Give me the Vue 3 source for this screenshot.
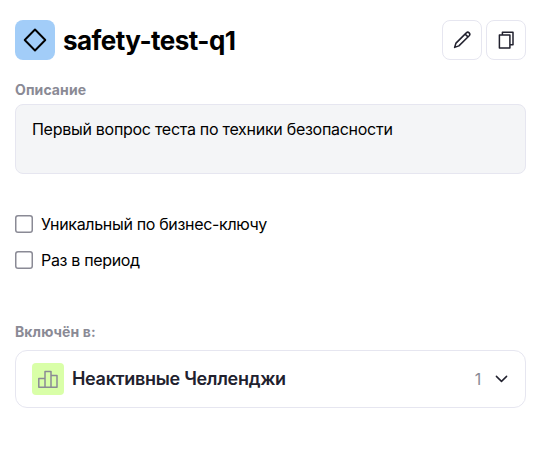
<script setup>
import { ref } from 'vue'

const options = ref([
  { id: 'unique', label: 'Уникальный по бизнес-ключу', checked: false },
  { id: 'period', label: 'Раз в период', checked: false },
])
</script>

<template>
  <main class="card">
    <header class="card_header">
      <span class="card_logo">
        <svg width="24" height="24" viewBox="0 0 24 24">
          <path d="M12 1.5 22.3 12 12 22.5 1.7 12Z" />
        </svg>
      </span>
      <h1 class="card_title">safety-test-q1</h1>
      <div class="card_actions">
        <button class="card_button" type="button" aria-label="Редактировать">
          <svg width="20" height="20" viewBox="0 0 20 20">
            <path d="M2.6 17.4 4 13.1 14.3 2.9a1.9 1.9 0 0 1 2.9 2.8L6.9 15.9Z M13.1 4.1l2.9 2.8" />
          </svg>
        </button>
        <button class="card_button" type="button" aria-label="Копировать">
          <svg width="20" height="20" viewBox="0 0 20 20">
            <path d="M3.4 5.1h10.5v12.8H3.4Z M6.4 5.1V2.3H17v12.4h-3.1" />
          </svg>
        </button>
      </div>
    </header>

    <h2 class="card_label">Описание</h2>
    <div class="description">Первый вопрос теста по техники безопасности</div>

    <div class="options">
      <label v-for="item in options" :key="item.id" class="option">
        <input v-model="item.checked" type="checkbox" class="option_checkbox" />
        <span>{{ item.label }}</span>
      </label>
    </div>

    <h2 class="card_label">Включён в:</h2>
    <div class="group">
      <span class="group_icon">
        <svg width="22" height="20" viewBox="0 0 22 20">
          <path d="M1.8 18.3V9.6h6.2v8.7Z M8 18.3V2.6h6v15.7Z M14 6.6h6v11.7h-6" />
        </svg>
      </span>
      <span class="group_name">Неактивные Челленджи</span>
      <span class="group_count">1</span>
      <svg class="group_arrow" width="14" height="8" viewBox="0 0 14 8">
        <path d="m2.4 1.4 5.1 5 5.1-5" />
      </svg>
    </div>
  </main>
</template>

<style>
body {
  background: #fff;
}
</style>

<style scoped>
.card {
  box-sizing: border-box;
  width: 550px;
  padding: 20px 24px 0 15px;
  font-family: Inter, 'Liberation Sans', sans-serif;
  font-size: 16px;
  line-height: 24px;
  letter-spacing: -0.28px;
  color: #000;
}

svg {
  fill: none;
  stroke: currentColor;
  stroke-width: 1.5;
  stroke-linecap: round;
  stroke-linejoin: round;
}

.card_header {
  display: flex;
  align-items: center;
  height: 40px;
}

.card_logo {
  display: flex;
  align-items: center;
  justify-content: center;
  width: 40px;
  height: 40px;
  border-radius: 8px;
  background: #a2cdf8;
}

.card_logo svg {
  stroke-width: 1.9;
}

.card_title {
  margin: 0 0 0 8px;
  padding-top: 2px;
  font-size: 26px;
  line-height: 40px;
  font-weight: 700;
  letter-spacing: -0.54px;
}

.card_actions {
  display: flex;
  gap: 4px;
  margin-left: auto;
}

.card_button {
  display: flex;
  align-items: center;
  justify-content: center;
  width: 40px;
  height: 40px;
  padding: 0;
  border: 1px solid #e6e6f0;
  border-radius: 8px;
  background: #fff;
  color: #21212e;
  cursor: pointer;
}

.card_label {
  margin: 20px 0 4px;
  font-size: 14px;
  line-height: 20px;
  font-weight: 700;
  letter-spacing: 0.1px;
  color: #8a8a95;
}

.description {
  box-sizing: border-box;
  height: 70px;
  padding: 12px 16px;
  border: 1px solid #e6e6f0;
  border-radius: 8px;
  background: #f4f5f7;
}

.options {
  display: flex;
  flex-direction: column;
  gap: 12px;
  margin: 38px 0 50px;
  letter-spacing: -0.33px;
}

.option {
  display: flex;
  align-items: center;
  gap: 8px;
  cursor: pointer;
}

.option_checkbox {
  appearance: none;
  box-sizing: border-box;
  width: 18px;
  height: 18px;
  margin: 0;
  border: 0;
  border-radius: 3px;
  background: #fff;
  box-shadow: inset 0 0 0 1.5px #8a8a95;
}

.option_checkbox:checked {
  background: #8a8a95;
}

.group {
  display: flex;
  align-items: center;
  box-sizing: border-box;
  height: 58px;
  margin-top: 8px;
  padding: 0 17px 0 16px;
  border: 1px solid #e6e6f0;
  border-radius: 12px;
}

.group_icon {
  display: flex;
  align-items: center;
  justify-content: center;
  width: 32px;
  height: 32px;
  border-radius: 4px;
  background: #d9ffa8;
  color: #8a8a95;
}

.group_name {
  margin-left: 8px;
  font-size: 18px;
  font-weight: 600;
  letter-spacing: -0.31px;
  color: #21212e;
}

.group_count {
  margin: 0 13px 0 auto;
  color: #8a8a95;
}

.group_arrow {
  color: #21212e;
}
</style>
